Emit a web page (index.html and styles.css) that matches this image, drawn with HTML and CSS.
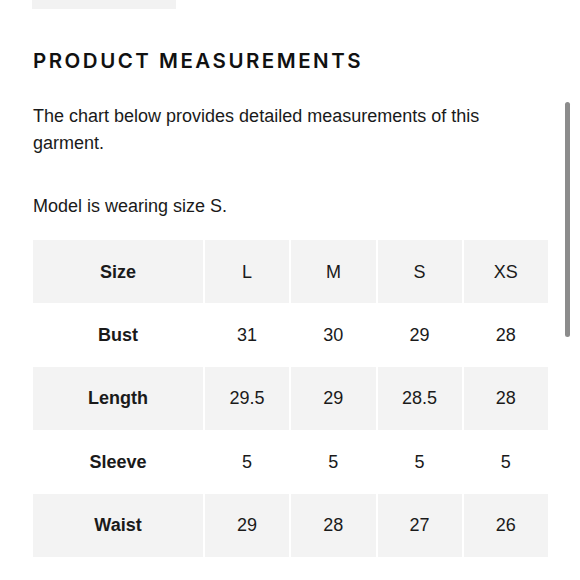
FILE: index.html
```html
<!DOCTYPE html>
<html>
<head>
<meta charset="utf-8">
<link rel="stylesheet" href="styles.css">
</head>
<body>
<div class="page">
  <div class="topbox"></div>
  <h1 class="title">PRODUCT MEASUREMENTS</h1>
  <p class="text first">The chart below provides detailed measurements of this garment.</p>
  <p class="text second">Model is wearing size S.</p>
  <div class="chart">
    <div class="cell head shade">Size</div>
    <div class="cell shade">L</div>
    <div class="cell shade">M</div>
    <div class="cell shade">S</div>
    <div class="cell shade">XS</div>

    <div class="cell head">Bust</div>
    <div class="cell">31</div>
    <div class="cell">30</div>
    <div class="cell">29</div>
    <div class="cell">28</div>

    <div class="cell head shade">Length</div>
    <div class="cell shade">29.5</div>
    <div class="cell shade">29</div>
    <div class="cell shade">28.5</div>
    <div class="cell shade">28</div>

    <div class="cell head">Sleeve</div>
    <div class="cell">5</div>
    <div class="cell">5</div>
    <div class="cell">5</div>
    <div class="cell">5</div>

    <div class="cell head shade">Waist</div>
    <div class="cell shade">29</div>
    <div class="cell shade">28</div>
    <div class="cell shade">27</div>
    <div class="cell shade">26</div>
  </div>
</div>
<div class="scrollbar"></div>
</body>
</html>
```

FILE: styles.css
```css
html, body {
  margin: 0;
  padding: 0;
  background: #ffffff;
}

.page {
  width: 515px;
  padding-left: 33px;
  display: flex;
  flex-direction: column;
  align-items: flex-start;
}

.topbox {
  width: 144px;
  height: 9px;
  margin-left: -1px;
  background: #f2f2f2;
}

.title {
  margin: 40px 0 0 0;
  font-family: "Inter", "Liberation Sans", sans-serif;
  font-weight: 600;
  font-size: 20.5px;
  line-height: 24px;
  letter-spacing: 2.5px;
  color: #111111;
}

.text {
  margin: 0;
  font-family: "Liberation Sans", Arial, sans-serif;
  font-size: 18px;
  line-height: 27px;
  color: #1a1a1a;
}

.first {
  margin-top: 29.5px;
}

.second {
  margin-top: 36.5px;
}

.chart {
  margin-top: 20px;
  width: 515px;
  display: grid;
  grid-template-columns: 170px repeat(4, 1fr);
  grid-auto-rows: 63.4px;
  column-gap: 2px;
  font-family: "Liberation Sans", Arial, sans-serif;
  font-size: 18px;
  color: #1a1a1a;
}

.cell {
  display: flex;
  align-items: center;
  justify-content: center;
  padding-top: 1px;
}

.shade {
  background: #f3f3f3;
}

.head {
  font-weight: bold;
}

.scrollbar {
  position: absolute;
  left: 565px;
  top: 102px;
  width: 5px;
  height: 235px;
  border-radius: 3px;
  background: #8c8c8c;
}
```
